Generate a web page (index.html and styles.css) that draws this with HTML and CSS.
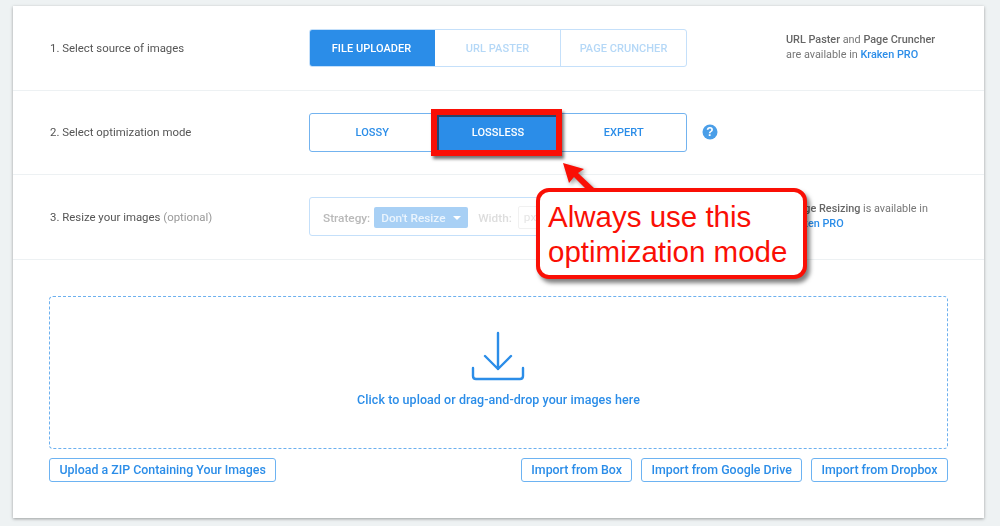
FILE: index.html
```html
<!DOCTYPE html>
<html lang="en">
<head>
<meta charset="utf-8">
<title>Kraken</title>
<link rel="stylesheet" href="styles.css">
</head>
<body>
<main class="card">
  <section class="row">
    <div class="label">1. Select source of images</div>
    <div class="seg seg-faint">
      <div class="opt opt-on">FILE UPLOADER</div>
      <div class="opt">URL PASTER</div>
      <div class="opt">PAGE CRUNCHER</div>
    </div>
    <p class="note"><b>URL Paster</b> and <b>Page Cruncher</b><br>are available in <a class="link">Kraken PRO</a></p>
  </section>
  <section class="row">
    <div class="label">2. Select optimization mode</div>
    <div class="seg seg-strong">
      <div class="opt">LOSSY</div>
      <div class="opt opt-on">LOSSLESS</div>
      <div class="opt">EXPERT</div>
    </div>
    <svg class="help" width="16" height="16" viewBox="0 0 16 16"><circle cx="8" cy="8" r="7.5" fill="#4a9ee8"/><text x="8" y="12" text-anchor="middle" class="help-q">?</text></svg>
  </section>
  <section class="row">
    <div class="label">3. Resize your images <span class="muted">(optional)</span></div>
    <div class="resize">
      <span class="field-label">Strategy:</span>
      <span class="select">Don't Resize <i class="caret"></i></span>
      <span class="field-label field-dim">Width:</span>
      <span class="input">px</span>
    </div>
    <p class="note note-low"><b>Image Resizing</b> is available in<br><a class="link">Kraken PRO</a></p>
  </section>
  <section class="upload">
    <div class="drop">
      <svg class="drop-icon" width="54" height="52" viewBox="0 0 54 52" fill="none" stroke="#2b8de8" stroke-width="2.4" stroke-linecap="round" stroke-linejoin="round"><path d="M27 3V39M14 26L27 39L40 26M2 38V46Q2 49 5 49H49Q52 49 52 46V38"/></svg>
      <div class="drop-text">Click to upload or drag-and-drop your images here</div>
    </div>
    <div class="actions">
      <a class="btn">Upload a ZIP Containing Your Images</a>
      <div class="spacer"></div>
      <a class="btn">Import from Box</a>
      <a class="btn">Import from Google Drive</a>
      <a class="btn">Import from Dropbox</a>
    </div>
  </section>
</main>
<div class="mark"></div>
<svg class="arrow" width="50" height="40" viewBox="0 0 50 40"><path d="M1 1L22 7L16 11L33 27L24 27L12 15L7 21Z" fill="#fa0f05"/></svg>
<div class="callout">Always use this<br>optimization mode</div>
</body>
</html>
```
FILE: styles.css
```css
* { box-sizing: border-box; }
html, body { margin: 0; height: 526px; overflow: hidden; }
body { background: #eef2f3; font-family: Roboto, Lato, sans-serif; color: #555; position: relative; }
.card { margin: 6px 0 0 13px; width: 971px; height: 512px; background: #fff; box-shadow: 0 1px 3px rgba(0,0,0,.35); filter: blur(.3px); }
.row { height: 84.5px; display: flex; align-items: center; padding-left: 37px; border-bottom: 1px solid #edf1f3; position: relative; }
.label { width: 259px; font-size: 11.4px; color: #555; }
.muted { color: #999; }
.seg { width: 378px; height: 39px; display: flex; border-radius: 3px; border: 1px solid; overflow: hidden; }
.seg-faint { border-color: #c5e0fa; color: #b5d8f7; height: 38px; margin-top: 1px; }
.seg-strong { border-color: #73b3ef; color: #2b8de8; }
.opt { flex: 1; display: flex; align-items: center; justify-content: center; font-size: 11px; font-weight: 500; letter-spacing: .05px; border-right: 1px solid #c5e0fa; }
.seg-strong .opt { border-right-color: #73b3ef; }
.opt:last-child { border-right: 0; }
.opt-on { background: #2b8de8; color: #fff; border-right-color: #2b8de8; margin: -1px 0 -1px -1px; }
.seg-strong .opt-on { margin: 0; }
.note { margin: 0 0 0 99px; font-size: 10.85px; line-height: 14.5px; color: #777; }
.note b { font-weight: 500; color: #666; }
.note-low { white-space: nowrap; }
.link { color: #2b8de8; font-weight: 500; }
.help { margin-left: 15px; }
.help-q { font: 700 12px "Liberation Sans", sans-serif; fill: #fff; }
.resize { width: 378px; height: 39px; border: 1px solid #c5e0fa; border-radius: 3px; display: flex; align-items: center; padding: 2px 0 0 13px; gap: 4px; font-size: 11.8px; }
.field-label { color: #b9b9b9; font-weight: 500; }
.field-dim { color: #ddd; margin-left: 6px; }
.select { width: 94px; height: 21px; background: #a8d0f5; color: #eaf4fd; border-radius: 2px; display: flex; align-items: center; padding-left: 7px; gap: 7px; font-weight: 500; }
.caret { width: 0; height: 0; border: 4px solid transparent; border-top: 4px solid #fff; border-bottom: 0; margin-left: 1px; }
.input { width: 30px; height: 23px; border: 1px solid #f1f1f1; border-radius: 2px; color: #e5e5e5; padding: 3px 5px; margin-left: 2px; }
.upload { padding: 36px 36px 0 36px; }
.drop { height: 153px; border: 1px dashed #6cb0ef; border-radius: 4px; display: flex; flex-direction: column; align-items: center; padding-top: 33px; }
.drop-icon { display: block; margin-left: -2px; }
.drop-text { margin-top: 10px; font-size: 12.5px; font-weight: 500; color: #2b8de8; letter-spacing: .06px; }
.actions { display: flex; gap: 8.5px; margin-top: 9px; }
.spacer { flex: 1; }
.btn { height: 24px; padding: 0 9.5px; display: flex; align-items: center; border: 1px solid #6db3f2; border-radius: 3px; font-size: 12.4px; font-weight: 500; color: #2b8de8; }
.mark { position: absolute; left: 431px; top: 109px; width: 131px; height: 47px; border: 6px solid #fa0f05; box-shadow: 2px 3px 3px rgba(0,0,0,.55), inset 2px 2px 0 #24466e; }
.arrow { position: absolute; left: 562px; top: 162px; filter: drop-shadow(2px 2px 2px rgba(0,0,0,.4)); }
.callout { position: absolute; left: 536px; top: 188px; width: 271px; height: 91px; padding: 8px 0 0 8px; background: #fff; border: 4px solid #fa0f05; border-radius: 13px; box-shadow: 3px 4px 4px rgba(0,0,0,.5); font: 29.5px/34.5px "Liberation Sans", sans-serif; color: #fa0f05; white-space: nowrap; }
```
